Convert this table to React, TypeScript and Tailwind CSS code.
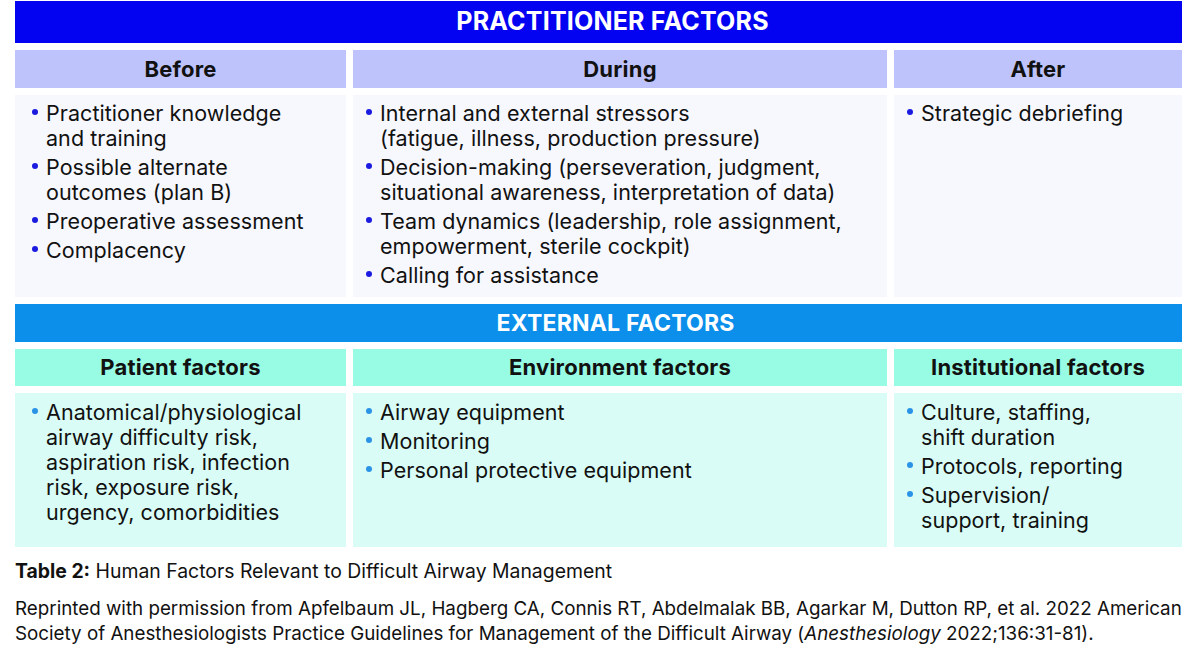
import React from "react";

const font = { fontFamily: "Inter, 'Noto Sans', sans-serif" };

function Item({ lines, dot }: { lines: string[]; dot: string }) {
  return (
    <div className="flex items-start">
      <span className={`w-[6px] h-[6px] rounded-full shrink-0 mt-[8px] mr-[8px] ${dot}`} />
      <div className="text-[21.5px] leading-[25px] text-[#111] whitespace-nowrap tracking-[0.05px]">
        {lines.map((l, i) => (
          <div key={i}>{l}</div>
        ))}
      </div>
    </div>
  );
}

function Body({ items, bg, dot, pt, pl }: { items: string[][]; bg: string; dot: string; pt: string; pl: string }) {
  return (
    <div className={`${bg} ${pt} ${pl} flex flex-col gap-[4px]`}>
      {items.map((it, i) => (
        <Item key={i} lines={it} dot={dot} />
      ))}
    </div>
  );
}

export default function App() {
  const blueDot = "bg-[#1b1be0]";
  const tealDot = "bg-[#2b93e6]";
  const subBlue =
    "h-[38px] bg-[#bec4fb] flex items-center justify-center font-bold text-[22px] tracking-[0.2px] text-[#111]";
  const subTeal =
    "h-[37px] bg-[#98fce4] flex items-center justify-center font-bold text-[22px] tracking-[0.2px] text-[#111]";
  return (
    <div className="w-[1200px] h-[660px] bg-white overflow-hidden" style={font}>
      <div className="ml-[15px] w-[1167px] pt-[1px] flex flex-col">
        <div className="h-[42px] pl-[28px] bg-[#0303f2] text-white font-bold text-[25px] flex items-center justify-center tracking-[0.2px]">
          PRACTITIONER FACTORS
        </div>
        <div className="mt-[7px] grid grid-cols-[331px_534px_288px] gap-x-[7px]">
          <div className={subBlue}>Before</div>
          <div className={subBlue}>During</div>
          <div className={subBlue}>After</div>
        </div>
        <div className="mt-[7px] h-[202px] grid grid-cols-[331px_534px_288px] gap-x-[7px]">
          <Body
            bg="bg-[#f7f8fe]"
            dot={blueDot}
            pt="pt-[6px]"
            pl="pl-[17px]"
            items={[
              ["Practitioner knowledge", "and training"],
              ["Possible alternate", "outcomes (plan B)"],
              ["Preoperative assessment"],
              ["Complacency"],
            ]}
          />
          <Body
            bg="bg-[#f7f8fe]"
            dot={blueDot}
            pt="pt-[6px]"
            pl="pl-[13px]"
            items={[
              ["Internal and external stressors", "(fatigue, illness, production pressure)"],
              ["Decision-making (perseveration, judgment,", "situational awareness, interpretation of data)"],
              ["Team dynamics (leadership, role assignment,", "empowerment, sterile cockpit)"],
              ["Calling for assistance"],
            ]}
          />
          <Body bg="bg-[#f7f8fe]" dot={blueDot} pt="pt-[6px]" pl="pl-[13px]" items={[["Strategic debriefing"]]} />
        </div>
        <div className="mt-[7px] h-[38px] pl-[34px] bg-[#0c8fea] text-white font-bold text-[23px] flex items-center justify-center tracking-[0.2px]">
          EXTERNAL FACTORS
        </div>
        <div className="mt-[7px] grid grid-cols-[331px_534px_288px] gap-x-[7px]">
          <div className={subTeal}>Patient factors</div>
          <div className={subTeal}>Environment factors</div>
          <div className={subTeal}>Institutional factors</div>
        </div>
        <div className="mt-[7px] h-[154px] grid grid-cols-[331px_534px_288px] gap-x-[7px]">
          <Body
            bg="bg-[#d9fdf6]"
            dot={tealDot}
            pt="pt-[7px]"
            pl="pl-[17px]"
            items={[
              [
                "Anatomical/physiological",
                "airway difficulty risk,",
                "aspiration risk, infection",
                "risk, exposure risk,",
                "urgency, comorbidities",
              ],
            ]}
          />
          <Body
            bg="bg-[#d9fdf6]"
            dot={tealDot}
            pt="pt-[7px]"
            pl="pl-[13px]"
            items={[["Airway equipment"], ["Monitoring"], ["Personal protective equipment"]]}
          />
          <Body
            bg="bg-[#d9fdf6]"
            dot={tealDot}
            pt="pt-[7px]"
            pl="pl-[13px]"
            items={[
              ["Culture, staffing,", "shift duration"],
              ["Protocols, reporting"],
              ["Supervision/", "support, training"],
            ]}
          />
        </div>
        <div className="mt-[12px] text-[19.4px] leading-[24px] text-[#111] whitespace-nowrap">
          <span className="font-bold">Table 2:</span> Human Factors Relevant to Difficult Airway Management
        </div>
        <div className="mt-[13px] text-[18.8px] leading-[25px] text-[#111]">
          <div className="whitespace-nowrap">
            Reprinted with permission from Apfelbaum JL, Hagberg CA, Connis RT, Abdelmalak BB, Agarkar M, Dutton RP, et al. 2022 American
          </div>
          <div className="whitespace-nowrap">
            Society of Anesthesiologists Practice Guidelines for Management of the Difficult Airway (<i>Anesthesiology</i> 2022;136:31-81).
          </div>
        </div>
      </div>
    </div>
  );
}
